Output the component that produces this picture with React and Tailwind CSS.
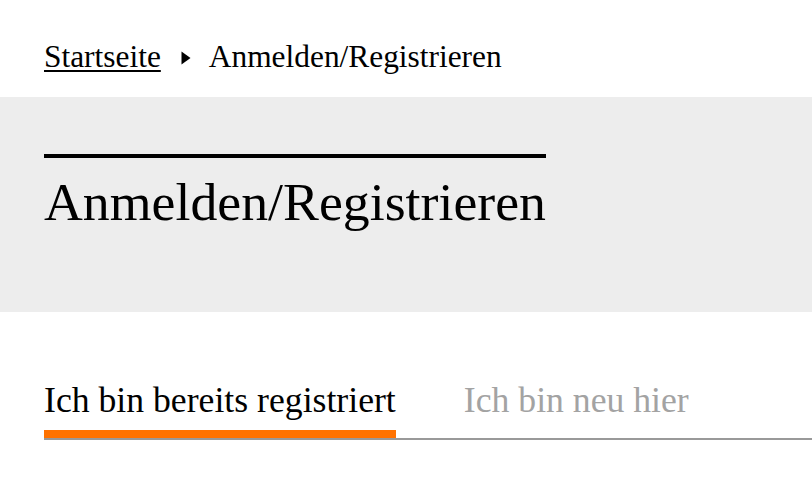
export default function App() {
  const serif = { fontFamily: '"Liberation Serif", "Times New Roman", serif' };
  return (
    <div className="w-[812px] h-[498px] bg-white overflow-hidden text-black" style={serif}>
      <div className="h-[97px] pl-[44px] pt-[41px] flex items-start">
        <div className="flex items-start text-[31.4px] leading-[31px]">
          <span className="underline decoration-[1.5px] underline-offset-[3px]">Startseite</span>
          <svg className="shrink-0 ml-[20px] mr-[18px] mt-[10px]" width="10" height="14" viewBox="0 0 10 14">
            <polygon points="0.5,0.5 9.5,7 0.5,13.5" fill="#000" />
          </svg>
          <span>Anmelden/Registrieren</span>
        </div>
      </div>
      <div className="h-[215px] bg-[#ededed] pl-[44px] pt-[57px]">
        <div className="inline-block border-t-4 border-black pt-[17px]">
          <h1 className="text-[53.8px] leading-[54px] font-normal">Anmelden/Registrieren</h1>
        </div>
      </div>
      <div className="pl-[44px] pt-[71px]">
        <div className="flex border-b-2 border-[#999999] text-[35.7px] leading-[35.5px]">
          <div className="pb-[11px] border-b-8 border-[#ff7200] text-black">Ich bin bereits registriert</div>
          <div className="ml-[68px] pb-[11px] text-[#a3a3a3]">Ich bin neu hier</div>
        </div>
      </div>
    </div>
  );
}
